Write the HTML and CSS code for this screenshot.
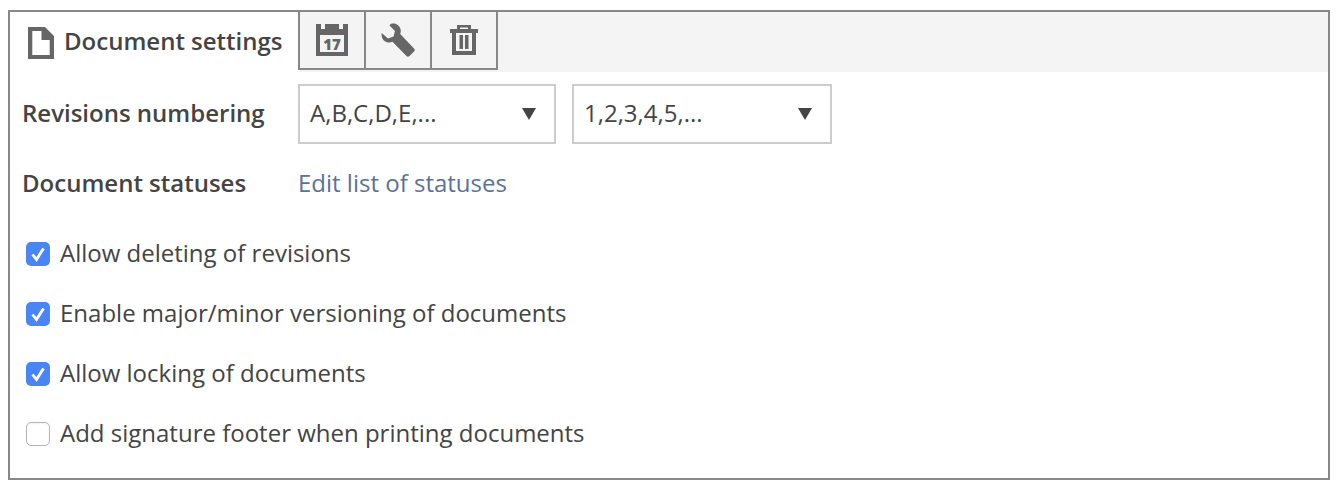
FILE: index.html
```html
<!DOCTYPE html>
<html lang="en">
<head>
<meta charset="utf-8">
<title>Document settings</title>
<link rel="stylesheet" href="styles.css">
</head>
<body>
<div class="panel">
  <div class="tabs">
    <div class="tab-active">
      <svg class="doc-icon" width="26" height="32" viewBox="0 0 26 32"><path fill-rule="evenodd" d="M0 0H17L26 9V32H0ZM4.300 4V28H21.700V13H13.500V4Z" fill="#666"/></svg>
      <span class="txt">Document settings</span>
    </div>
    <div class="tab-btn">
      <svg width="32" height="32" viewBox="0 0 32 32"><path fill-rule="evenodd" d="M0 0H5V5H9V0H23V5H27V0H32V32H0ZM4 11V28H28V11Z" fill="#666"/><text x="16" y="25.500" text-anchor="middle" class="cal-num">17</text></svg>
    </div>
    <div class="tab-btn">
      <svg width="34" height="34" viewBox="0 0 34 34"><path d="M11 0.500C14.500 0 18.500 2 19.500 6C20 8 19.800 9.500 19.200 11L33 25.500C34 26.500 34 27.500 33 28.500L28.500 33C27.500 34 26.300 34 25.400 33L11.500 18.800C9.500 19.600 7.500 19.800 5.500 19C2 17.800 0 14 0.700 10L7 15.500L12.500 13.500L14 8L8.500 2.500C9 1.500 10 0.800 11 0.500Z" fill="#666"/></svg>
    </div>
    <div class="tab-btn">
      <svg width="28" height="30" viewBox="0 0 28 30"><path fill-rule="evenodd" d="M7 0H21V4H28V8H26V30H2V8H0V4H7ZM10 2.500V4H18V2.500ZM6 8V26H22V8Z" fill="#666"/><path d="M9.500 10H13V24H9.500ZM15 10H18.500V24H15Z" fill="#666"/></svg>
    </div>
    <div class="tab-fill"></div>
  </div>
  <div class="content">
    <div class="row row-select">
      <div class="label txt">Revisions numbering</div>
      <div class="select select-first"><span class="txt">A,B,C,D,E,...</span><i class="caret"></i></div>
      <div class="select select-second"><span class="txt">1,2,3,4,5,...</span><i class="caret"></i></div>
    </div>
    <div class="row row-status">
      <div class="label txt">Document statuses</div>
      <a class="link txt" href="#">Edit list of statuses</a>
    </div>
    <label class="row check-row">
      <span class="box on"><svg width="24" height="24" viewBox="0 0 24 24"><path d="M6.500 12.500L10.500 17.500L17.500 6.500" fill="none" stroke="#fff" stroke-width="2.800"/></svg></span>
      <span class="txt">Allow deleting of revisions</span>
    </label>
    <label class="row check-row">
      <span class="box on"><svg width="24" height="24" viewBox="0 0 24 24"><path d="M6.500 12.500L10.500 17.500L17.500 6.500" fill="none" stroke="#fff" stroke-width="2.800"/></svg></span>
      <span class="txt">Enable major/minor versioning of documents</span>
    </label>
    <label class="row check-row">
      <span class="box on"><svg width="24" height="24" viewBox="0 0 24 24"><path d="M6.500 12.500L10.500 17.500L17.500 6.500" fill="none" stroke="#fff" stroke-width="2.800"/></svg></span>
      <span class="txt">Allow locking of documents</span>
    </label>
    <label class="row check-row">
      <span class="box"></span>
      <span class="txt">Add signature footer when printing documents</span>
    </label>
  </div>
</div>
</body>
</html>
```
FILE: styles.css
```css
* { box-sizing: border-box; }
html, body { margin: 0; padding: 0; background: #fff; }
body {
  padding: 10px 8px 0;
  font-family: "Open Sans", sans-serif;
  font-size: 24px;
  color: #444;
}
.txt { padding-bottom: 4px; }
.panel {
  width: 1322px;
  height: 470px;
  border: 2px solid #888;
  display: flex;
  flex-direction: column;
}
.tabs {
  display: flex;
  height: 60px;
  background: #f4f4f4;
}
.tab-active {
  width: 288px;
  height: 60px;
  background: #fff;
  display: flex;
  align-items: center;
  padding-left: 18px;
  gap: 10px;
  font-weight: 600;
}
.doc-icon { flex: none; margin-top: 2px; }
.tab-btn {
  width: 68px;
  height: 60px;
  margin-top: -2px;
  margin-right: -2px;
  border: 2px solid #888;
  display: flex;
  align-items: center;
  justify-content: center;
  background: #f4f4f4;
}
.tab-fill { flex: 1; }
.cal-num {
  font-family: "Open Sans", sans-serif;
  font-size: 15px;
  font-weight: 800;
  fill: #666;
}
.content {
  padding: 12px 12px 0;
  display: flex;
  flex-direction: column;
}
.row {
  height: 60px;
  display: flex;
  align-items: center;
}
.row-select { margin-bottom: 10px; }
.row-status { margin-bottom: 10px; }
.label {
  width: 276px;
  font-weight: 600;
  flex: none;
}
.select {
  height: 60px;
  border: 2px solid #ccc;
  background: #fff;
  display: flex;
  align-items: center;
  justify-content: space-between;
  padding: 0 18px 0 10px;
  font-size: 24px;
}
.select-first { width: 258px; margin-right: 16px; }
.select-second { width: 260px; }
.caret {
  width: 0;
  height: 0;
  border-left: 7.500px solid transparent;
  border-right: 7.500px solid transparent;
  border-top: 12px solid #444;
}
.link {
  color: #5a7297;
  text-decoration: none;
}
.check-row { gap: 10px; padding-left: 4px; }
.box {
  width: 24px;
  height: 24px;
  flex: none;
  border-radius: 5px;
  border: 1px solid #b5b5b5;
  background: #fff;
  display: block;
  box-shadow: inset 0 1px 2px rgba(0,0,0,.06);
}
.box.on {
  border: 0;
  background: #4a85f5;
  box-shadow: none;
}
.box svg { display: block; }
```
